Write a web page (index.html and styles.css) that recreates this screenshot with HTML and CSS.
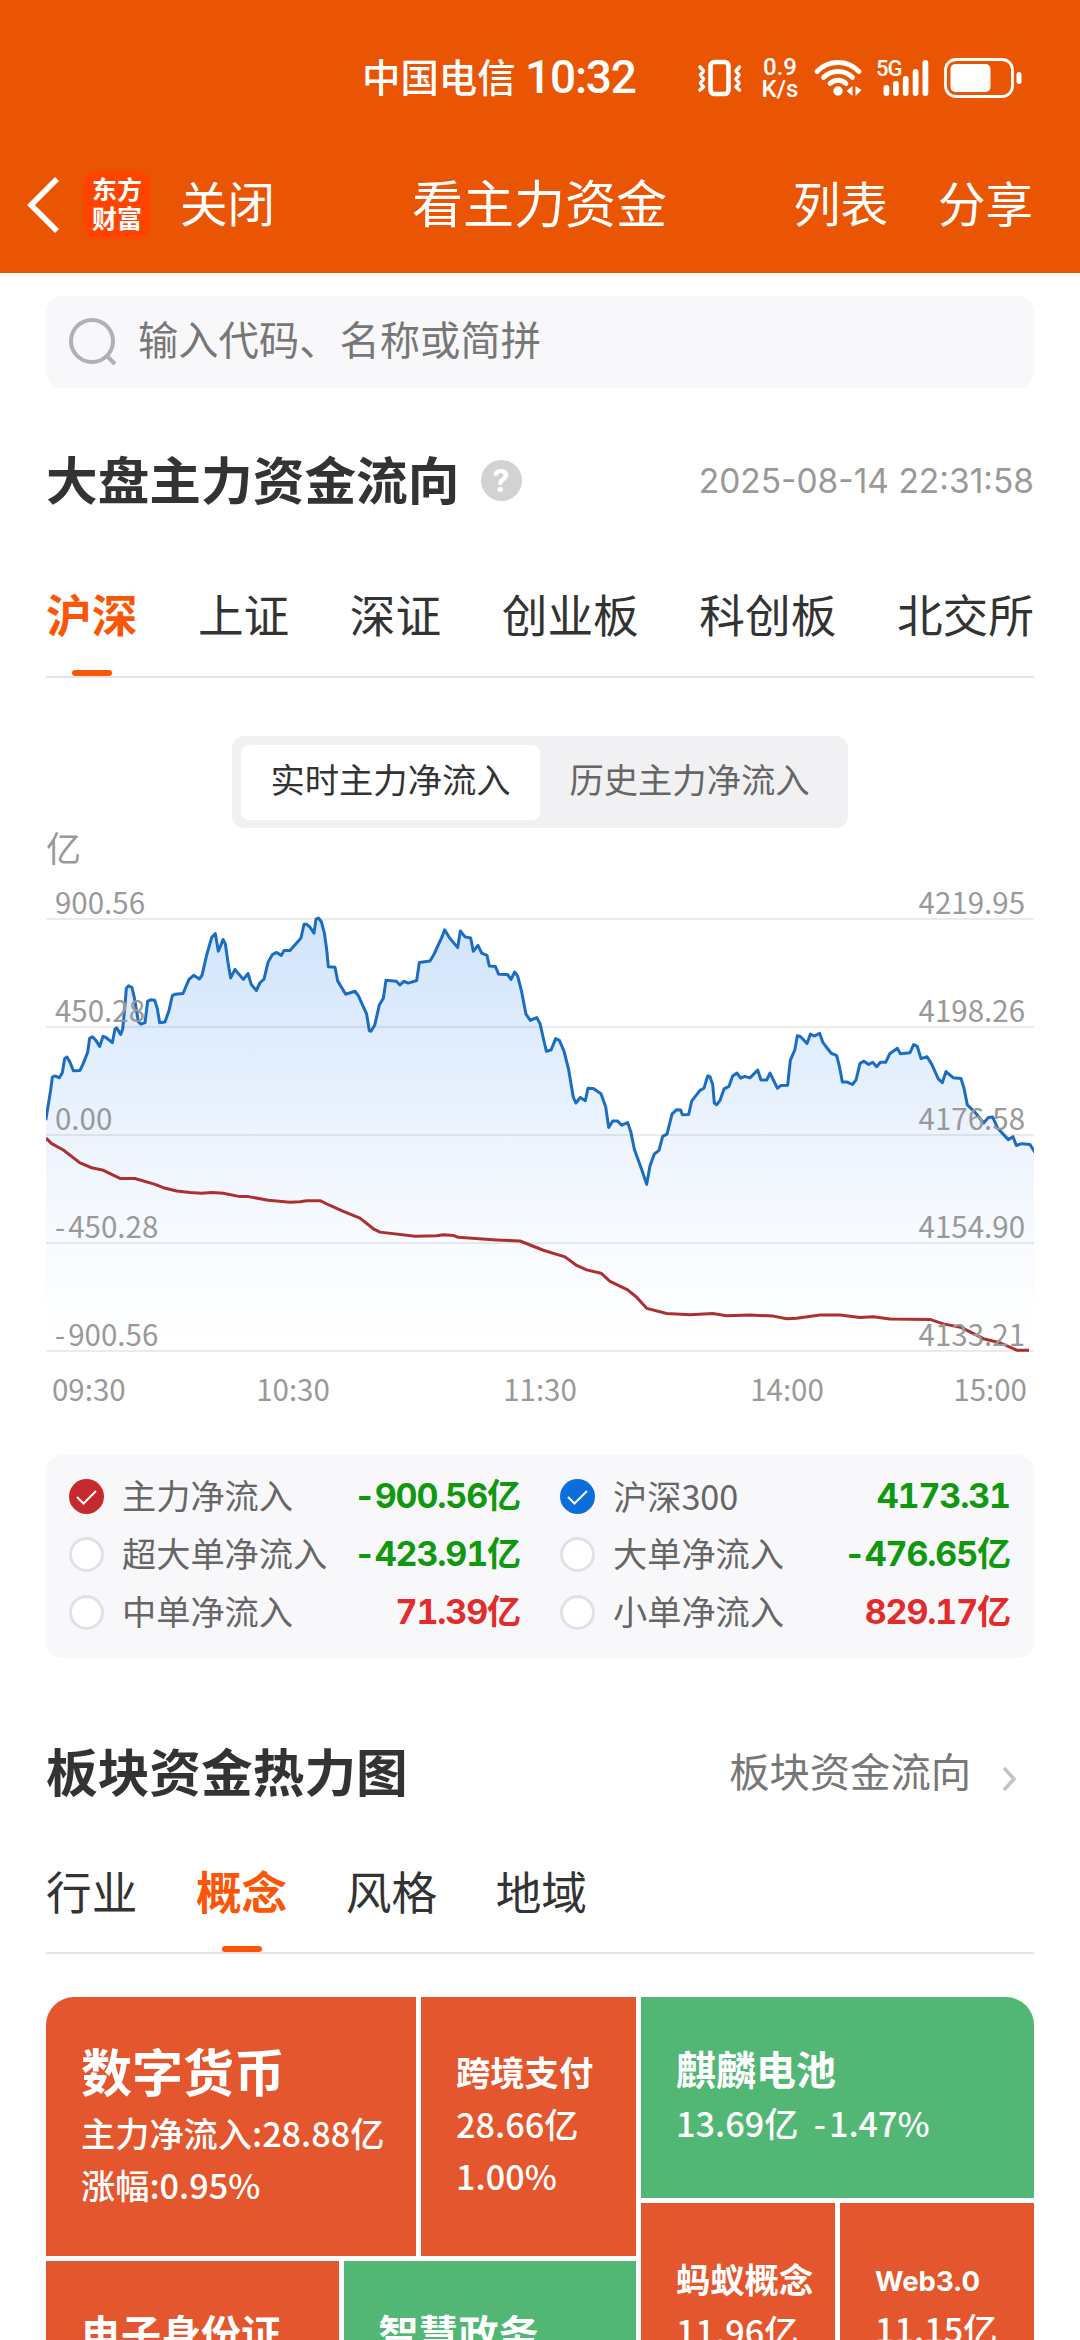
FILE: index.html
```html
<!DOCTYPE html>
<html lang="zh-CN">
<head>
    <meta charset="UTF-8">
    <meta name="viewport" content="width=device-width, initial-scale=1.0">
    <title>看主力资金</title>
    <link rel="stylesheet" href="styles.css">
</head>

<body>
    <header class="header">
        <div class="status">
            <span class="carrier">中国电信</span>
            <span class="clock">10:32</span>
            <svg class="vibrate" width="46" height="40" viewBox="0 0 46 40" fill="none" stroke="#fff" stroke-width="4.600" stroke-linejoin="round" stroke-linecap="round">
                <rect x="13.500" y="4" width="18" height="32" rx="4"/>
                <path d="M3 9l3.500 4-3 4 3 4-3 4 3 4-3.500 3M42.500 9l-3.500 4 3 4-3 4 3 4-3 4 3.500 3" stroke-width="3.600"/>
            </svg>
            <span class="speed"><span>0.9</span><span>K/s</span></span>
            <svg class="wifi" width="50" height="40" viewBox="0 0 50 40" fill="none" stroke="#fff" stroke-width="4.800" stroke-linecap="round">
                <path d="M4 13.500a29 29 0 0 1 42 0M10.500 19.500a20.500 20.500 0 0 1 29 0M17 25.500a11.500 11.500 0 0 1 16 0"/>
                <circle cx="25" cy="33" r="4.700" fill="#fff" stroke="none"/>
                <path d="M39.500 28v10l-6-5zM42.500 28v10l6-6z" fill="#fff" stroke="none"/>
            </svg>
            <span class="mobile">
                <svg width="54" height="40" viewBox="0 0 54 40" fill="#fff">
                    <rect x="7.500" y="27" width="5.800" height="11" rx="2.900"/>
                    <rect x="17" y="23" width="5.800" height="15" rx="2.900"/>
                    <rect x="26.800" y="18" width="5.800" height="20" rx="2.900"/>
                    <rect x="36.700" y="11" width="5.800" height="27" rx="2.900"/>
                    <rect x="46.500" y="2" width="5.800" height="36" rx="2.900"/>
                </svg>
                <b>5G</b>
            </span>
            <svg class="battery" width="80" height="42" viewBox="0 0 80 42" fill="none">
                <rect x="1.500" y="2.500" width="67" height="37" rx="10.500" stroke="#fff" stroke-width="2.800"/>
                <rect x="6.500" y="7" width="40" height="28" rx="5" fill="#fff"/>
                <rect x="72.500" y="15" width="5" height="12" rx="2.500" fill="#fff"/>
            </svg>
        </div>
        <nav class="nav">
            <svg class="back" width="36" height="60" viewBox="0 0 36 60" fill="none" stroke="#fff" stroke-width="5.600">
                <path d="M32 4L6 30l26 26"/>
            </svg>
            <div class="logo"><span>东方</span><span>财富</span></div>
            <span class="close">关闭</span>
            <h1>看主力资金</h1>
            <span class="list">列表</span>
            <span>分享</span>
        </nav>
    </header>

    <main class="page">
        <div class="search">
            <svg width="50" height="50" viewBox="0 0 50 50" fill="none" stroke="#b1b1b3" stroke-width="4">
                <circle cx="24" cy="24" r="21"/>
                <path d="M39 39l8 8"/>
            </svg>
            <span>输入代码、名称或简拼</span>
        </div>

        <div class="heading">
            <h2>大盘主力资金流向</h2>
            <span class="help">?</span>
            <time>2025-08-14 22:31:58</time>
        </div>

        <div class="tabs market">
            <span class="active">沪深</span>
            <span>上证</span>
            <span>深证</span>
            <span>创业板</span>
            <span>科创板</span>
            <span>北交所</span>
        </div>

        <div class="segment">
            <span class="on">实时主力净流入</span>
            <span>历史主力净流入</span>
        </div>

        <div class="unit">亿</div>
        <div class="chart">
            <svg class="plot" viewBox="48 138 2964 1300" preserveAspectRatio="none">
                <defs>
                    <linearGradient id="area" gradientUnits="userSpaceOnUse" x1="0" y1="265" x2="0" y2="1438">
                        <stop offset="0" stop-color="#d0e4fc"/>
                        <stop offset=".5" stop-color="#ecf4fd"/>
                        <stop offset=".8" stop-color="#fafcff"/>
                        <stop offset="1" stop-color="#fff"/>
                    </linearGradient>
                </defs>
                <!-- closed outside the view box, so only the curve gets a visible stroke -->
                <path class="line blue" fill="url(#area)" d="M30 1500V810L48 808 62 730 67 695 75 692 88 697 97 683 104 645 111 641 120 655 130 678 150 677 160 658 173 628 179 590 187 586 197 595 209 612 219 585 228 588 247 602 255 565 260 562 272 580 278 565 284 510 289 455 296 448 306 453 313 480 325 545 333 552 345 548 353 490 363 486 374 487 382 510 389 548 405 546 417 515 427 475 436 471 459 469 477 431 491 420 508 430 516 420 530 365 545 318 556 307 565 355 572 340 579 323 586 335 594 385 602 427 615 404 640 431 654 415 664 445 679 461 690 440 702 430 714 385 727 364 740 358 754 366 762 353 780 353 813 319 822 282 830 282 840 290 852 306 858 268 865 265 874 275 883 305 890 350 895 397 915 398 923 435 947 471 975 463 985 475 1010 525 1018 570
                    1023 571 1034 555 1048 500 1060 482 1068 433 1099 436 1110 446 1121 436 1135 441 1160 434 1168 385 1200 381 1212 363 1235 318 1244 297 1258 318 1283 345 1291 300 1305 316 1322 319 1330 355 1344 339 1355 360 1371 366 1378 395 1396 396 1406 417 1433 418 1443 431 1454 411 1463 422 1475 465 1488 525 1501 542 1520 534 1530 550 1540 590 1549 625 1563 622 1577 591 1588 596 1602 625 1616 675 1630 750 1638 765 1651 750 1666 759 1674 725 1690 726 1713 740 1727 775 1736 831 1748 814 1763 814 1775 825 1793 818 1803 845 1813 890 1835 945 1850 985 1860 935 1873 903 1887 893 1898 855 1911 849 1926 795 1940 783 1952 784 1957 797 1976 796 1985 760 2010 731
                    2022 725 2033 692 2040 694 2048 715 2053 765 2060 770 2070 758 2082 727 2097 720 2108 692 2121 684 2132 698 2144 693 2160 697 2183 676 2193 703 2210 703 2220 684 2242 725 2253 718 2273 717 2281 650 2295 620 2302 583 2312 586 2331 604 2341 579 2352 584 2369 577 2379 602 2403 630 2420 637 2428 665 2437 708 2450 708 2467 715 2478 703 2490 658 2502 652 2516 661 2528 655 2540 667 2551 655 2567 655 2579 632 2602 617 2611 632 2640 629 2651 607 2662 612 2673 645 2691 640 2705 660 2725 700 2737 710 2748 680 2770 697 2793 699 2802 725 2812 770 2835 790 2861 819 2875 804 2888 803 2903 833 2935 864 2949 856 2959 880 2975 875 3000 877 3014 897 3030 897V1500z"/>
                <path class="line red" fill="none" d="M48 860L65 875 100 892 150 927 185 940 220 947 270 969 315 969 375 985 400 994 440 1003 480 1007 515 1009 545 1007 580 1009 630 1018 655 1018 715 1028 780 1033 810 1032 830 1029 870 1029 900 1042 940 1058 990 1076 1030 1105 1050 1114 1155 1125 1220 1124 1240 1121 1270 1123 1285 1128 1400 1135 1470 1138 1540 1163 1605 1181 1640 1204 1670 1216 1713 1225 1740 1247 1793 1270 1820 1290 1850 1320 1910 1334 1980 1337 2048 1334 2090 1340 2160 1338 2230 1341 2270 1348 2300 1347 2370 1338 2430 1338 2490 1345 2530 1343 2580 1349 2700 1350 2740 1362 2795 1372 2860 1402 2910 1413 2960 1433 2997 1433"/>
            </svg>
            <div class="level"><span>900.56</span><span>4219.95</span></div>
            <div class="level"><span>450.28</span><span>4198.26</span></div>
            <div class="level"><span>0.00</span><span>4176.58</span></div>
            <div class="level"><span><i>-</i>450.28</span><span>4154.90</span></div>
            <div class="level"><span><i>-</i>900.56</span><span>4133.21</span></div>
        </div>
        <div class="hours">
            <span>09:30</span><span>10:30</span><span>11:30</span><span>14:00</span><span>15:00</span>
        </div>

        <div class="legend">
            <div class="item">
                <svg width="35" height="35" viewBox="0 0 35 35"><circle cx="17.500" cy="17.500" r="17.500" fill="#c52b2e"/><path d="M8 18l6.500 6.500L27 12" fill="none" stroke="#fff" stroke-width="2"/></svg>
                <span>主力净流入</span><b class="down">-900.56亿</b>
            </div>
            <div class="item">
                <svg width="35" height="35" viewBox="0 0 35 35"><circle cx="17.500" cy="17.500" r="17.500" fill="#0b6edb"/><path d="M8 18l6.500 6.500L27 12" fill="none" stroke="#fff" stroke-width="2"/></svg>
                <span>沪深<em>300</em></span><b class="down">4173.31</b>
            </div>
            <div class="item"><i></i><span>超大单净流入</span><b class="down">-423.91亿</b></div>
            <div class="item"><i></i><span>大单净流入</span><b class="down">-476.65亿</b></div>
            <div class="item"><i></i><span>中单净流入</span><b class="up">71.39亿</b></div>
            <div class="item"><i></i><span>小单净流入</span><b class="up">829.17亿</b></div>
        </div>

        <div class="heading second">
            <h2>板块资金热力图</h2>
            <span class="more">板块资金流向</span>
            <svg width="18" height="28" viewBox="0 0 18 28" fill="none" stroke="#c3c3c5" stroke-width="3.600"><path d="M3 3l10 11L3 25"/></svg>
        </div>

        <div class="tabs sector">
            <span>行业</span>
            <span class="active">概念</span>
            <span>风格</span>
            <span>地域</span>
        </div>

        <div class="heatmap">
            <div class="left">
                <div class="row row1">
                    <div class="tile t1"><h3>数字货币</h3><p>主力净流入:28.88亿</p><p>涨幅:0.95%</p></div>
                    <div class="tile t2"><h3>跨境支付</h3><p>28.66亿</p><p>1.00%</p></div>
                </div>
                <div class="row row2">
                    <div class="tile t3"><h3>电子身份证</h3></div>
                    <div class="tile t3 green"><h3>智慧政务</h3></div>
                </div>
            </div>
            <div class="right">
                <div class="tile t4 green"><h3>麒麟电池</h3><p>13.69亿&nbsp; <i>-</i>1.47%</p></div>
                <div class="row row2">
                    <div class="tile t5"><h3>蚂蚁概念</h3><p>11.96亿</p></div>
                    <div class="tile t6"><h3>Web3.0</h3><p>11.15亿</p></div>
                </div>
            </div>
        </div>
    </main>
</body>
</html>
```
FILE: styles.css
```css
* {
    box-sizing: border-box;
    margin: 0;
    padding: 0;
}
body {
    width: 1080px;
    height: 2340px;
    overflow: hidden;
    background: #fff;
    color: #333;
    font-family: Inter, "Noto Sans CJK SC", sans-serif;
    line-height: 1.2;
    white-space: nowrap;
}
svg {
    display: block;
    flex: none;
}

/* header */
.header {
    height: 273px;
    background: #ea5504;
    color: #fff;
}
.status {
    display: flex;
    align-items: center;
    height: 156px;
    padding-left: 362px;
}
.carrier {
    width: 163px;
    font-size: 38.400px;
    font-weight: 500;
}
.clock {
    width: 172px;
    font-family: Roboto, sans-serif;
    font-size: 46px;
    font-weight: 500;
    letter-spacing: -1.2px;
}
.speed {
    display: flex;
    flex-direction: column;
    align-items: center;
    width: 40px;
    margin: 0 13px 0 17px;
    font: 500 24px/22.500px Roboto, sans-serif;
}
.mobile {
    position: relative;
    margin-left: 13px;
}
.mobile b {
    position: absolute;
    left: 0;
    top: 0;
    font: 500 22px/22px Roboto, sans-serif;
    letter-spacing: -1px;
}
.battery {
    margin-left: 14px;
}
.nav {
    display: flex;
    align-items: center;
    height: 97px;
    padding-left: 25px;
    font-size: 47.500px;
}
.logo {
    display: flex;
    flex-direction: column;
    align-items: center;
    justify-content: center;
    width: 68px;
    height: 68px;
    margin-left: 22px;
    border-radius: 14px;
    background: #ff4400;
    font-size: 25px;
    font-weight: bold;
    line-height: 29px;
}
.close {
    width: 232px;
    margin-left: 29px;
}
.nav h1 {
    width: 381px;
    font-size: 51px;
    font-weight: normal;
}
.list {
    width: 145px;
}

/* page body */
.page {
    padding: 23px 46px 0;
}
.search {
    display: flex;
    align-items: center;
    height: 92px;
    padding-left: 22px;
    border-radius: 16px;
    background: #f8f8fa;
    color: #777;
    font-size: 40.300px;
}
.search span {
    margin: -2px 0 0 20px;
}
.heading {
    display: flex;
    align-items: center;
    height: 80px;
    margin-top: 53px;
}
.heading h2 {
    font-size: 51.700px;
}
.help {
    width: 41px;
    height: 41px;
    margin: -1px 0 0 21px;
    border-radius: 50%;
    background: #d2d2d4;
    color: #fff;
    font-size: 31px;
    font-weight: bold;
    line-height: 41px;
    text-align: center;
}
.heading time {
    margin-left: auto;
    color: #999;
    font-size: 33.500px;
}
.tabs {
    display: flex;
    border-bottom: 2px solid #e5e5e5;
    font-size: 45.700px;
    line-height: 76px;
}
.tabs span {
    position: relative;
}
.market {
    justify-content: space-between;
    height: 99px;
    margin-top: 58px;
}
.tabs .active {
    color: #fb5607;
    font-weight: bold;
}
.tabs .active::after {
    content: "";
    position: absolute;
    left: 50%;
    bottom: 0;
    width: 40px;
    height: 6px;
    margin-left: -20px;
    border-radius: 3px;
    background: #fb5607;
}
.segment {
    display: flex;
    align-items: center;
    width: 616px;
    height: 92px;
    margin: 58px auto 0;
    padding: 9px;
    border-radius: 12px;
    background: #f1f1f3;
    color: #666;
    font-size: 34.300px;
}
.segment span {
    flex: 1;
    height: 75px;
    line-height: 72px;
    text-align: center;
}
.segment .on {
    border-radius: 8px;
    background: #fff;
    color: #333;
}

/* chart */
.unit {
    height: 43px;
    color: #999;
    font-size: 35px;
    line-height: 42px;
}
.chart {
    position: relative;
    height: 481px;
}
.plot {
    position: absolute;
    left: 0;
    top: 0;
    width: 988px;
    height: 481px;
}
.line {
    stroke-width: 3px;
    stroke-linejoin: round;
    vector-effect: non-scaling-stroke;
}
.blue {
    stroke: #1b6dc1;
}
.red {
    stroke: #ad3030;
}
.level {
    position: relative;
    display: flex;
    align-items: flex-end;
    justify-content: space-between;
    height: 108.100px;
    padding: 0 9px;
    border-bottom: 2px solid rgba(60, 60, 70, .1);
    color: #999;
    font-family: "Noto Sans CJK SC", sans-serif;
    font-size: 29.500px;
    line-height: 33px;
}
.level i, .tile i {
    margin-right: 3px;
    font-style: normal;
}
.plot + .level {
    height: 48.600px;
}
.hours {
    display: grid;
    grid-template-columns: 1fr 2fr 2fr 2fr 1fr;
    padding-top: 14px;
    color: #999;
    font-family: "Noto Sans CJK SC", sans-serif;
    font-size: 29.500px;
    line-height: 44px;
    text-align: center;
}
.hours span:first-child {
    padding-left: 6px;
    text-align: left;
}
.hours span:last-child {
    padding-right: 7px;
    text-align: right;
}

/* legend */
.legend {
    display: grid;
    grid-template-columns: 451px 450px;
    column-gap: 40px;
    align-content: start;
    height: 203px;
    margin-top: 45px;
    padding: 12px 0 0 23px;
    border-radius: 16px;
    background: #f8f8fa;
}
.item {
    display: flex;
    align-items: center;
    height: 58px;
    color: #666;
    font-size: 34.200px;
}
.item i {
    width: 35px;
    height: 35px;
    border: 3px solid #dde1e8;
    border-radius: 50%;
    background: #fff;
}
.item span {
    margin: 1px 0 0 18px;
}
.item em {
    font-family: "Noto Sans CJK SC", sans-serif;
    font-style: normal;
}
.item b {
    margin: 1px 0 0 auto;
    font-size: 34px;
    font-variant-numeric: tabular-nums;
    letter-spacing: -1.100px;
}
.down {
    color: #10980f;
}
.up {
    color: #e32b2b;
}

/* heat map */
.second {
    margin-top: 75px;
}
.more {
    margin-left: auto;
    color: #777;
    font-size: 40.300px;
}
.second svg {
    margin: 12px 15px 0 30px;
}
.sector {
    gap: 58.500px;
    height: 97px;
    margin-top: 44px;
    line-height: 74px;
}
.heatmap {
    display: flex;
    gap: 5px;
    height: 400px;
    margin-top: 43px;
    border-radius: 28px 28px 0 0;
    overflow: hidden;
    color: #fff;
    font-weight: 500;
}
.left {
    width: 590px;
}
.right {
    width: 393px;
}
.row {
    display: flex;
    gap: 5px;
}
.row1 {
    height: 259px;
}
.row2 {
    height: 200px;
    margin-top: 5px;
}
.tile {
    flex: 1;
    padding-left: 35px;
    background: #e4572e;
    font-size: 34.200px;
}
.tile p {
    font-family: "Noto Sans CJK SC", sans-serif;
    line-height: 52px;
}
.tile h3 {
    margin-bottom: -3px;
    font-size: 34.300px;
    font-weight: bold;
    line-height: 53px;
}
.t1 {
    flex: 0 0 370px;
    padding-top: 41px;
}
.t1 h3 {
    font-size: 51px;
    line-height: 71px;
}
.t2 {
    padding-top: 50px;
}
.t3 {
    padding-top: 47px;
}
.t3 h3, .t4 h3 {
    font-size: 40px;
}
.t4 {
    height: 201px;
    padding-top: 46px;
}
.t4 h3 {
    line-height: 56px;
}
.t5, .t6 {
    padding-top: 51px;
}
.t6 h3 {
    font-size: 27.500px;
    line-height: 54px;
}
.t6 p {
    line-height: 46px;
}
.green {
    background: #52b774;
}
```
